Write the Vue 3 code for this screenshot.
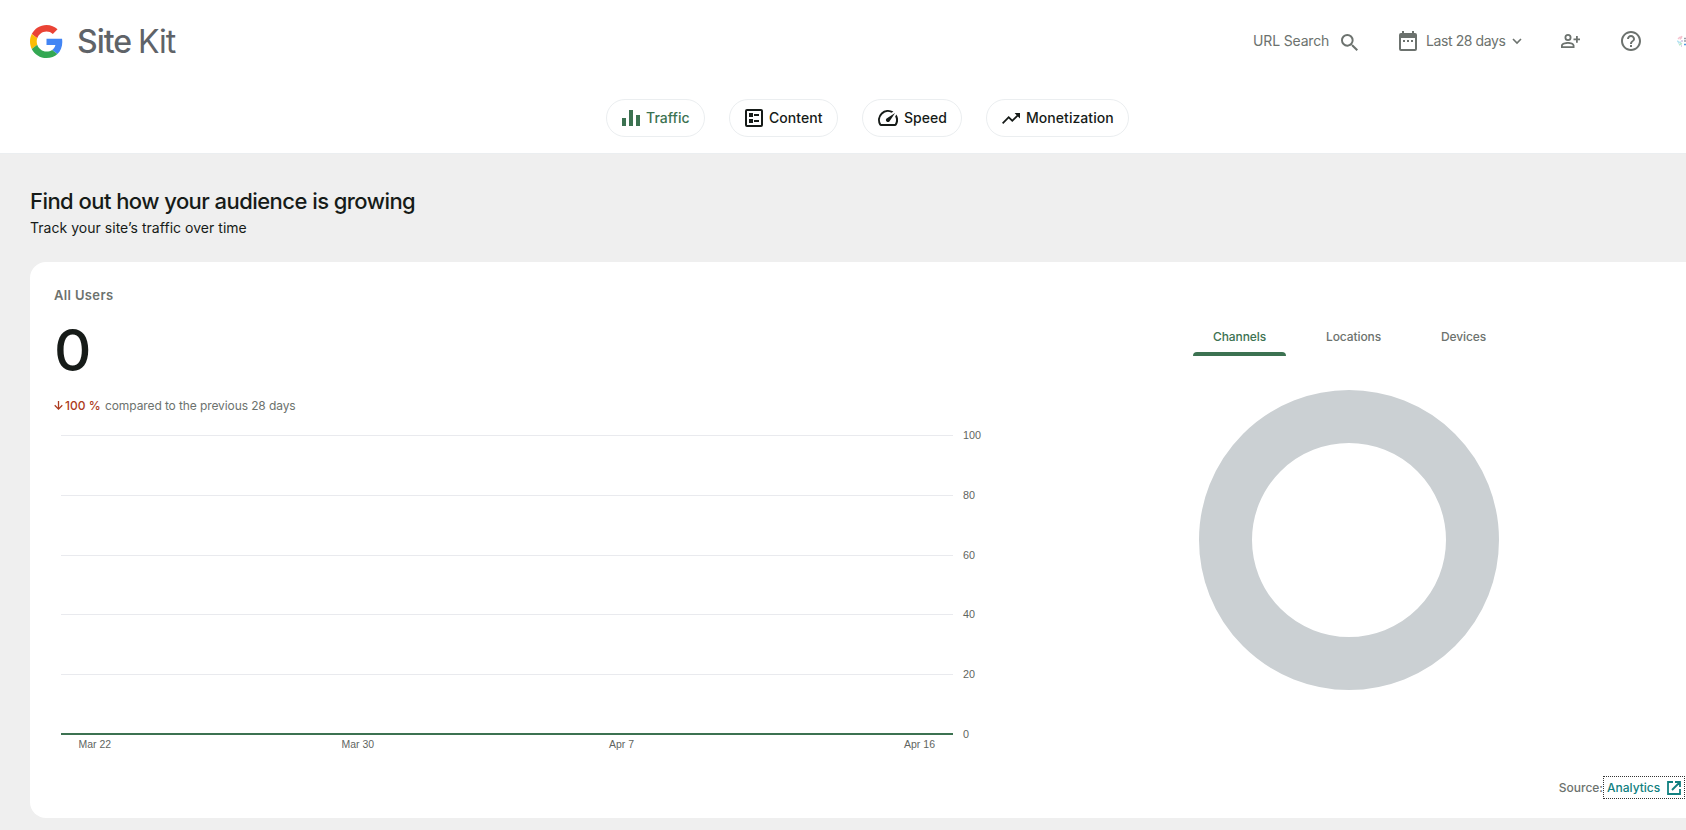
<script setup>
import { ref } from "vue";

const sections = [
    { id: "traffic", label: "Traffic", width: 99, icon: "M0 8h4v8H0zM7 0h4v16H7zM14 5h4v11h-4z", box: "0 0 18 16", w: 18, h: 16 },
    { id: "content", label: "Content", width: 109, icon: "M2 0h14a2 2 0 0 1 2 2v14a2 2 0 0 1-2 2H2a2 2 0 0 1-2-2V2a2 2 0 0 1 2-2zM2 2v14h14V2zM4 4h4v4H4zM4 10h4v4H4zM9 5h5v2H9zM9 11h5v2H9z", box: "0 0 18 18", w: 18, h: 18 },
    { id: "speed", label: "Speed", width: 100, icon: "M20.38 8.57l-1.23 1.85a8 8 0 0 1-.22 7.58H5.07A8 8 0 0 1 15.58 6.85l1.85-1.23A10 10 0 0 0 3.35 19a2 2 0 0 0 1.72 1h13.85a2 2 0 0 0 1.74-1 10 10 0 0 0-.27-10.44zm-9.79 6.84a2 2 0 0 0 2.83 0l5.66-8.49-8.49 5.66a2 2 0 0 0 0 2.83z", box: "2 4 20 16", w: 20, h: 16 },
    { id: "monetization", label: "Monetization", width: 143, icon: "M16 6l2.29 2.29-4.88 4.88-4-4L2 16.59 3.41 18l6-6 4 4 6.3-6.29L22 12V6z", box: "2 6 20 12", w: 18, h: 11 }
];
const activeSection = ref("traffic");

const tabs = ["Channels", "Locations", "Devices"];
const activeTab = ref("Channels");

const gridLines = [
    { y: 6.5, value: 100 },
    { y: 66.5, value: 80 },
    { y: 126.5, value: 60 },
    { y: 185.5, value: 40 },
    { y: 245.5, value: 20 }
];
const dates = [
    { x: 24.5, label: "Mar 22", length: 32.5 },
    { x: 287.5, label: "Mar 30", length: 32.5 },
    { x: 555, label: "Apr 7", length: 25 },
    { x: 850, label: "Apr 16", length: 31 }
];
</script>

<template>
  <div class="page">
    <header class="header">
      <div class="top-bar">
        <div class="brand">
          <svg
            class="google-logo"
            viewBox="0 0 48 48"
          >
            <path
              fill="#EA4335"
              d="M24 9.5c3.54 0 6.71 1.22 9.21 3.6l6.85-6.85C35.9 2.38 30.47 0 24 0 14.62 0 6.51 5.38 2.56 13.22l7.98 6.19C12.43 13.72 17.74 9.5 24 9.5z"
            />
            <path
              fill="#4285F4"
              d="M46.98 24.55c0-1.57-.15-3.09-.38-4.55H24v9.02h12.94c-.58 2.96-2.26 5.48-4.78 7.18l7.73 6c4.51-4.18 7.09-10.36 7.09-17.65z"
            />
            <path
              fill="#FBBC05"
              d="M10.53 28.59c-.48-1.45-.76-2.99-.76-4.59s.27-3.14.76-4.59l-7.98-6.19C.92 16.46 0 20.12 0 24c0 3.88.92 7.54 2.56 10.78l7.97-6.19z"
            />
            <path
              fill="#34A853"
              d="M24 48c6.48 0 11.93-2.13 15.89-5.81l-7.73-6c-2.15 1.45-4.92 2.3-8.16 2.3-6.26 0-11.57-4.22-13.47-9.91l-7.98 6.19C6.51 42.62 14.62 48 24 48z"
            />
          </svg>
          <span class="brand-name"><span class="brand-site">Site</span> Kit</span>
        </div>
        <div class="tools">
          <button class="tool url-search">
            <span>URL Search</span>
            <svg
              width="17"
              height="17"
              viewBox="3 3 17.49 17.49"
            >
              <path d="M15.5 14h-.79l-.28-.27A6.471 6.471 0 0 0 16 9.5 6.5 6.5 0 1 0 9.5 16c1.61 0 3.09-.59 4.23-1.57l.27.28v.79l5 4.99L20.49 19l-4.99-5zm-6 0C7.01 14 5 11.99 5 9.5S7.01 5 9.5 5 14 7.01 14 9.5 11.99 14 9.5 14z" />
            </svg>
          </button>
          <button class="tool date-range">
            <svg
              width="18"
              height="20"
              viewBox="0 0 18 20"
            >
              <path
                fill-rule="evenodd"
                d="M2 2h1V0h2v2h8V0h2v2h1a2 2 0 0 1 2 2v14a2 2 0 0 1-2 2H2a2 2 0 0 1-2-2V4a2 2 0 0 1 2-2zM2 7v11h14V7zM4 9h2v2H4zM8 9h2v2H8zM12 9h2v2h-2z"
              />
            </svg>
            <span>Last 28 days</span>
            <svg
              class="chevron"
              width="10"
              height="7"
              viewBox="0 0 10 7"
            >
              <path d="M1 1l4 4 4-4" />
            </svg>
          </button>
          <button class="tool add-user">
            <svg
              width="19"
              height="14"
              viewBox="0 0 19 14"
            >
              <path
                fill-rule="evenodd"
                d="M7 0a3.5 3.5 0 1 1 0 7 3.5 3.5 0 0 1 0-7zM7 1.8a1.7 1.7 0 1 0 0 3.4 1.7 1.7 0 0 0 0-3.4zM0 11.5C0 9 4.5 8 7 8s6.5 1 6.5 3.5V14H0zM1.8 12.2h9.9v-.7C11.5 10.6 9 9.8 7 9.8s-5 .8-5.2 1.7zM15 2h1.8v2.5H19v1.800h-2.200v2.500H15V6.300h-2.500V4.500H15z"
              />
            </svg>
          </button>
          <button class="tool help">
            <svg
              width="20"
              height="20"
              viewBox="2 2 20 20"
            >
              <path d="M11 18h2v-2h-2v2zm1-16C6.480 2 2 6.480 2 12s4.480 10 10 10 10-4.480 10-10S17.520 2 12 2zm0 18c-4.410 0-8-3.590-8-8s3.590-8 8-8 8 3.590 8 8-3.590 8-8 8zm0-14c-2.210 0-4 1.790-4 4h2c0-1.100.9-2 2-2s2 .9 2 2c0 2-3 1.750-3 5h2c0-2.250 3-2.500 3-5 0-2.210-1.790-4-4-4z" />
            </svg>
          </button>
          <svg
            class="avatar"
            width="9"
            height="12"
            viewBox="0 0 9 12"
          >
            <path
              stroke="#f5c3cf"
              d="M1 4l2-2M3 4.500l2-3.500M3 2l2 1"
            />
            <path
              stroke="#b8e4f2"
              d="M0 6l2 1M1 8l3-1"
            />
            <path
              stroke="#bfe8cc"
              d="M2 10l2-1M3 8l2 1"
            />
            <path
              stroke="#d4c2e4"
              d="M4 6h2M4 11h1"
            />
            <path
              stroke="#9aa1aa"
              d="M7 3.500h2M7 6h2"
            />
            <path
              stroke="#4f9de0"
              d="M7 9.500h2"
            />
          </svg>
        </div>
      </div>
      <nav class="sections">
        <button
          v-for="section in sections"
          :key="section.id"
          class="chip"
          :class="{ active: activeSection === section.id }"
          :style="{ width: section.width + 'px' }"
          @click="activeSection = section.id"
        >
          <svg
            :width="section.w"
            :height="section.h"
            :viewBox="section.box"
          >
            <path
              fill-rule="evenodd"
              :d="section.icon"
            />
          </svg>
          <span>{{ section.label }}</span>
        </button>
      </nav>
    </header>

    <main class="content">
      <h2 class="title">Find out how your audience is growing</h2>
      <p class="subtitle">Track your site’s traffic over time</p>

      <section class="card">
        <div class="overview">
          <h3 class="metric-name">All Users</h3>
          <div class="metric-value">0</div>
          <p class="change">
            <svg
              width="9"
              height="9"
              viewBox="0 0 9 9"
            >
              <path d="M4.5 0v8M.7 4.300l3.800 3.800 3.800-3.800" />
            </svg>
            <span class="change-value">100 %</span>
            <span class="change-text">compared to the previous 28 days</span>
          </p>
          <svg
            class="line-chart"
            width="940"
            height="330"
            viewBox="0 0 940 330"
          >
            <g
              v-for="line in gridLines"
              :key="line.value"
            >
              <line
                class="grid-line"
                x1="7"
                x2="899"
                :y1="line.y"
                :y2="line.y"
              />
              <text
                x="909"
                :y="line.y + 3.5"
                :textLength="line.value === 100 ? 18 : 12"
                lengthAdjust="spacingAndGlyphs"
              >{{ line.value }}</text>
            </g>
            <line
              class="data-line"
              x1="7"
              x2="899"
              y1="305"
              y2="305"
            />
            <text
              x="909"
              y="309"
              textLength="6"
              lengthAdjust="spacingAndGlyphs"
            >0</text>
            <text
              v-for="date in dates"
              :key="date.label"
              :x="date.x"
              y="319"
              :textLength="date.length"
              lengthAdjust="spacingAndGlyphs"
            >{{ date.label }}</text>
          </svg>
        </div>

        <div class="breakdown">
          <div class="tabs">
            <button
              v-for="tab in tabs"
              :key="tab"
              class="tab"
              :class="{ active: activeTab === tab }"
              @click="activeTab = tab"
            >
              <span class="tab-label">{{ tab }}</span>
              <span class="tab-indicator" />
            </button>
          </div>
          <svg
            class="donut"
            width="300"
            height="300"
            viewBox="0 0 300 300"
          >
            <circle
              cx="150"
              cy="150"
              r="123.5"
            />
          </svg>
          <div class="source">
            <span>Source:</span>
            <a class="source-link">
              <span>Analytics</span>
              <svg
                width="14"
                height="14"
                viewBox="0 0 14 14"
              >
                <path d="M6 1H1v12h12V8M8 1h5v5M13 1L5 9" />
              </svg>
            </a>
          </div>
        </div>
      </section>
    </main>
  </div>
</template>

<style>
body {
    background: #efefef;
    overflow: hidden;
}
</style>

<style scoped>
.page {
    width: 1686px;
    height: 830px;
    overflow: hidden;
    background: #efefef;
    color: #161b18;
    font-family: Inter, "Open Sans", sans-serif;
    font-size: 14px;
}

* {
    box-sizing: border-box;
}

svg {
    display: block;
    flex-shrink: 0;
    fill: currentColor;
}

button {
    border: 0;
    margin: 0;
    padding: 0;
    background: none;
    color: inherit;
    font: inherit;
    letter-spacing: inherit;
    white-space: nowrap;
    cursor: pointer;
}

.header {
    height: 153px;
    background: #fff;
    box-shadow: 0 1px 0 #ebeef0;
}

.top-bar {
    display: flex;
    align-items: center;
    justify-content: space-between;
    height: 82px;
    padding-left: 30px;
}

.brand {
    display: flex;
    align-items: center;
}

.google-logo {
    width: 33px;
    height: 33px;
}

.brand-name {
    margin-left: 14px;
    padding-top: 2px;
    color: #5f6368;
    font-size: 32px;
    line-height: 40px;
    letter-spacing: -1px;
    word-spacing: -1px;
}

.brand-site {
    font-weight: 500;
}

.tools {
    display: flex;
    align-items: center;
    color: #6c726e;
}

.tool {
    display: flex;
    align-items: center;
}

.tool span {
    padding-bottom: 2px;
}

.url-search {
    width: 105px;
    justify-content: space-between;
    margin-right: 41px;
    letter-spacing: -0.15px;
}

.url-search svg {
    margin-top: 2px;
}

.date-range {
    width: 123px;
    margin-right: 39px;
}

.date-range span {
    width: 86px;
    margin-left: 9px;
    text-align: left;
    letter-spacing: -0.4px;
}

.chevron {
    fill: none;
    stroke: currentColor;
    stroke-width: 1.6;
}

.add-user {
    margin-right: 41px;
}

.avatar {
    margin-left: 36px;
    fill: none;
    stroke-width: 1.4;
}

.sections {
    display: flex;
    gap: 24px;
    padding: 17px 0 0 606px;
}

.chip {
    display: flex;
    align-items: center;
    height: 38px;
    padding-left: 15px;
    border: 1px solid #ebeef0;
    border-radius: 19px;
    font-weight: 500;
    letter-spacing: 0.05px;
}

.chip span {
    margin-left: 6px;
    padding-bottom: 2px;
}

.chip.active {
    color: #3c7251;
}

.content {
    padding: 34px 0 0 30px;
}

.title {
    margin: 0;
    font-size: 22px;
    font-weight: 500;
    line-height: 28px;
    letter-spacing: -0.55px;
}

.subtitle {
    margin: 3px 0 24px;
    line-height: 20px;
    letter-spacing: 0.03px;
}

.card {
    display: flex;
    height: 556px;
    padding-left: 24px;
    border-radius: 16px 0 0 16px;
    background: #fff;
}

.overview {
    width: 940px;
}

.metric-name {
    margin: 23px 0 0;
    color: #6c726e;
    font-size: 13px;
    font-weight: 600;
    line-height: 20px;
    letter-spacing: 0.35px;
}

.metric-value {
    margin-top: 13px;
    font-size: 58px;
    font-weight: 500;
    line-height: 64px;
}

.change {
    display: flex;
    align-items: center;
    height: 20px;
    margin: 13px 0 0;
    color: #6c726e;
    font-size: 12px;
    white-space: nowrap;
}

.change svg,
.change-value {
    color: #ac3b20;
}

.change svg {
    fill: none;
    stroke: currentColor;
    stroke-width: 1.3;
}

.change-value {
    width: 40px;
    margin-left: 2px;
    font-weight: 500;
}

.change-text {
    letter-spacing: -0.1px;
}

.line-chart {
    margin-top: 14px;
}

.line-chart text {
    fill: #5f6561;
    font-family: "Liberation Sans", Arial, sans-serif;
    font-size: 10px;
}

.grid-line {
    stroke: #e9eaee;
    stroke-width: 1;
}

.data-line {
    stroke: #3c7251;
    stroke-width: 2;
}

.breakdown {
    display: flex;
    flex: 1;
    flex-direction: column;
    padding: 57px 0 0 199px;
}

.tabs {
    display: flex;
    gap: 20px;
}

.tab {
    display: flex;
    flex-direction: column;
    justify-content: space-between;
    height: 37px;
    color: #6c726e;
    font-size: 12px;
    font-weight: 500;
    letter-spacing: -0.1px;
}

.tab-label {
    padding: 10px 20px 0;
}

.tab-indicator {
    width: 100%;
    height: 4px;
    border-radius: 4px 4px 0 0;
}

.tab.active {
    color: #3c7251;
}

.tab.active .tab-indicator {
    background: #3c7251;
}

.donut {
    margin: 34px 0 0 6px;
    fill: none;
    stroke: #cbd0d3;
    stroke-width: 53;
}

.source {
    display: flex;
    align-items: center;
    justify-content: flex-end;
    margin-top: 86px;
    padding-right: 1px;
    color: #6c726e;
    font-size: 12px;
    font-weight: 500;
}

.source-link {
    display: flex;
    align-items: center;
    justify-content: space-between;
    width: 82px;
    height: 23px;
    padding: 0 3px;
    border: 1px dotted #333;
    color: #108080;
}

.source-link svg {
    fill: none;
    stroke: currentColor;
    stroke-width: 1.8;
}
</style>
